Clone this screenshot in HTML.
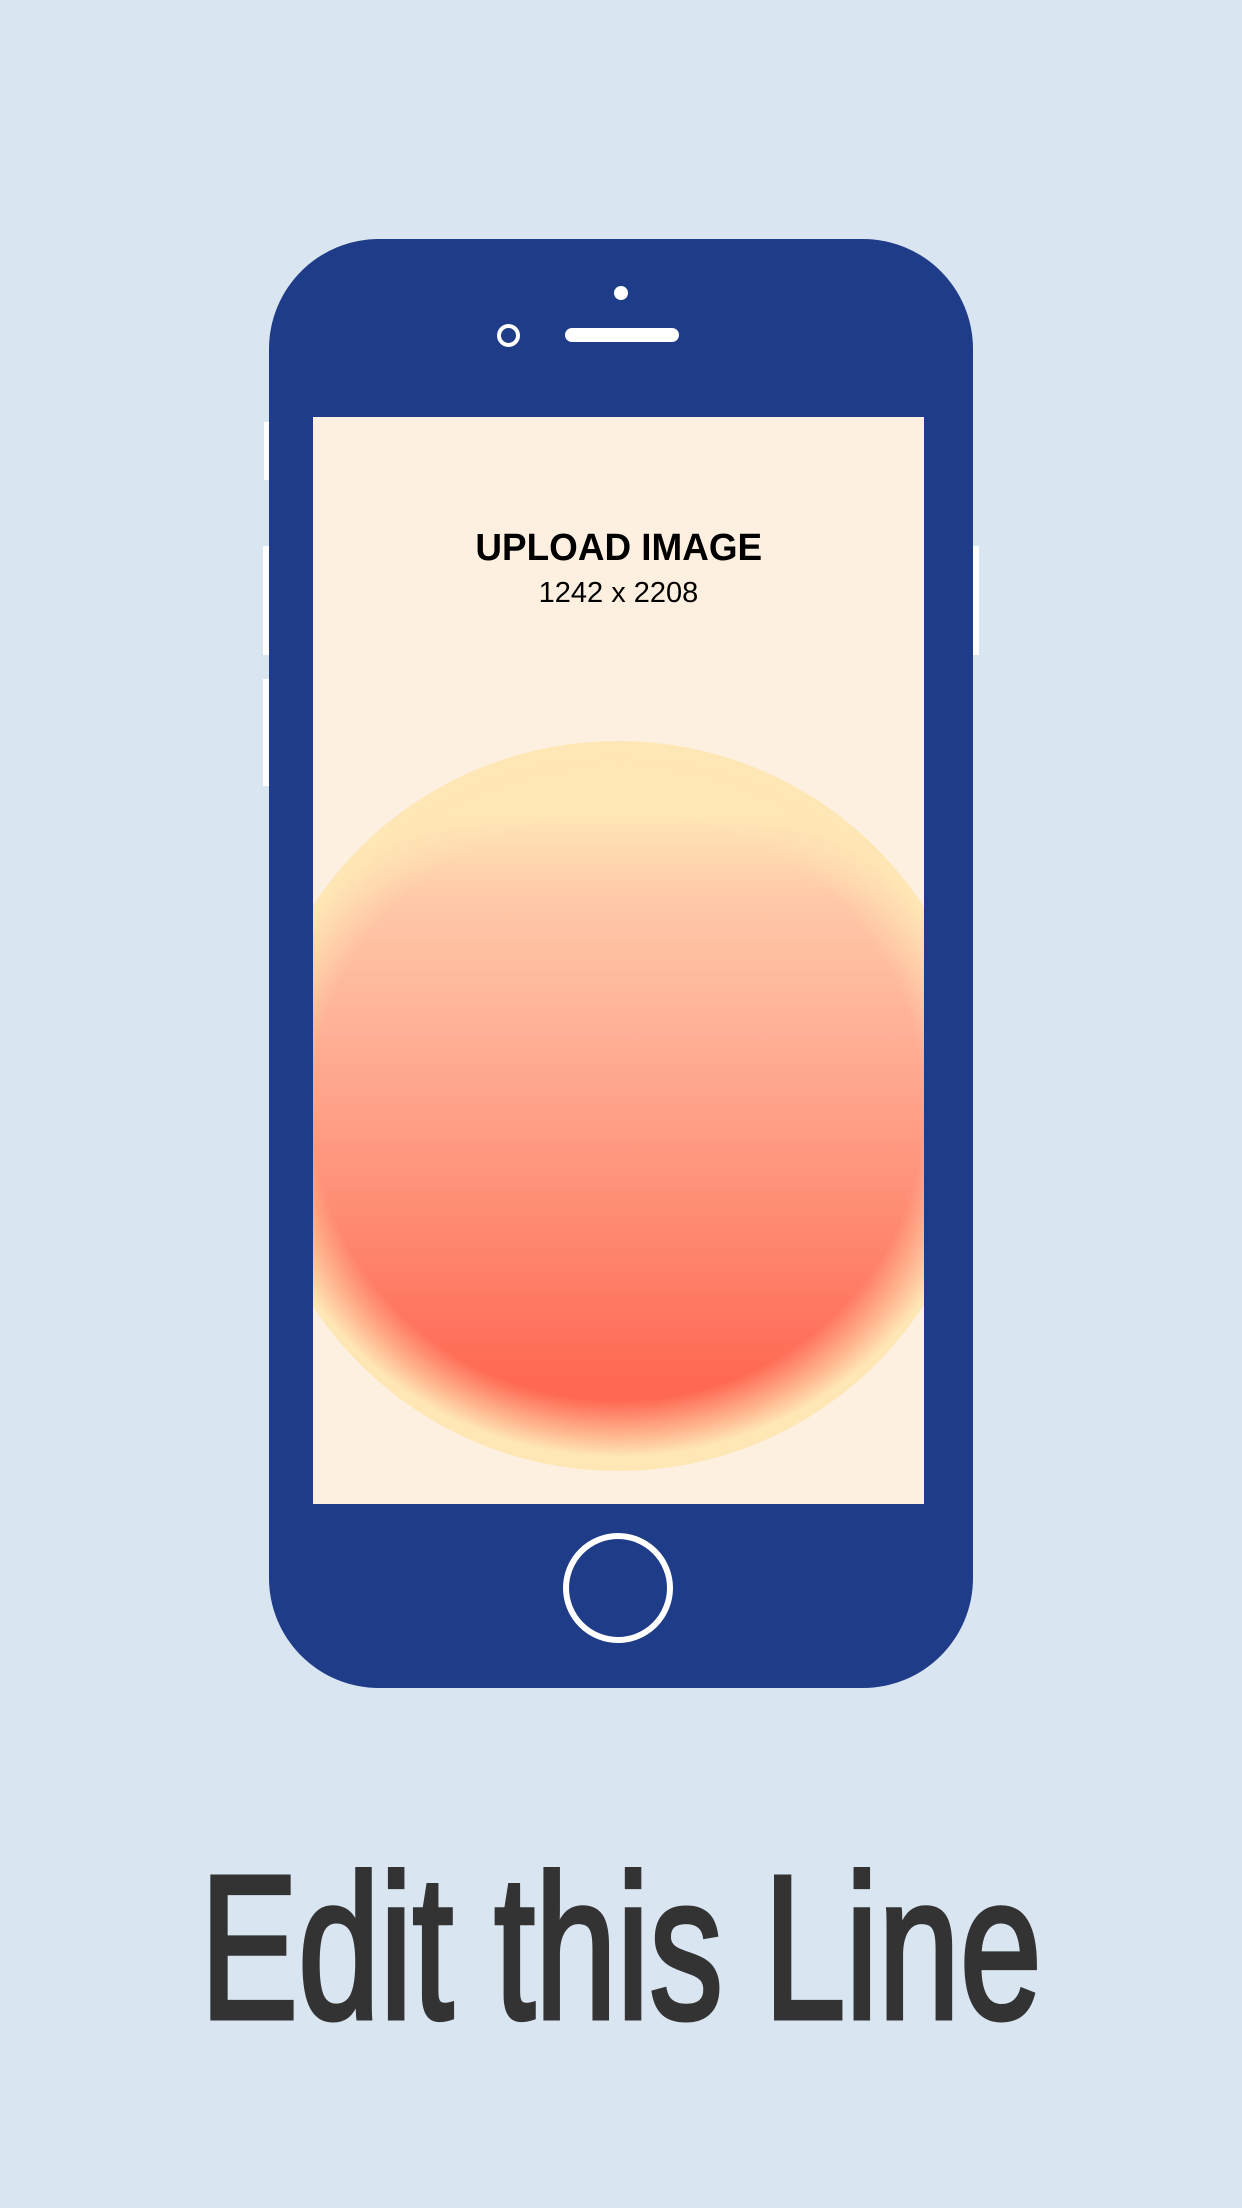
<!DOCTYPE html>
<html><head><meta charset="utf-8"><style>
html,body{margin:0;padding:0}
body{width:1242px;height:2208px;background:#d9e5f1;position:relative;overflow:hidden;font-family:"Liberation Sans",sans-serif}
.a{position:absolute}
.phone{left:269px;top:239px;width:704px;height:1449px;background:#1f3c88;border-radius:110px}
.screen{left:313px;top:417px;width:611px;height:1087px;background:#fdf0e1;overflow:hidden}
.circ{left:-60px;top:324px;width:730px;height:730px;border-radius:50%;background:#ffe6b5}
.inner{left:0;top:0;width:730px;height:730px;
background:linear-gradient(to bottom,#ffe6b5 0%,#ffe6b5 10%,#ffc8a8 22%,#ffb096 40%,#ff9078 62%,#ff6852 88%,#ff6450 100%);
-webkit-mask-image:radial-gradient(ellipse 50% 48% at 50% 50%,#000 84%,transparent 100%);
mask-image:radial-gradient(ellipse 50% 48% at 50% 50%,#000 84%,transparent 100%)}
.btn{background:#fff}
</style></head><body>
<div class="a btn" style="left:264px;top:422px;width:5px;height:58px"></div>
<div class="a btn" style="left:263px;top:546px;width:6px;height:109px"></div>
<div class="a btn" style="left:263px;top:679px;width:6px;height:107px"></div>
<div class="a btn" style="left:973px;top:546px;width:6px;height:109px"></div>
<div class="a phone"></div>
<div class="a" style="left:614px;top:286px;width:14px;height:14px;border-radius:50%;background:#fff"></div>
<div class="a" style="left:565px;top:328px;width:114px;height:14px;border-radius:7px;background:#fff"></div>
<div class="a" style="left:497px;top:324px;width:15px;height:15px;border-radius:50%;border:4px solid #fff"></div>
<div class="a screen">
  <div class="a circ"><div class="a inner"></div></div>
  <div class="a" style="left:0;width:611px;top:110px;text-align:center;font-weight:bold;font-size:38px;color:#000"><span style="display:inline-block;transform:scaleX(0.97)">UPLOAD IMAGE</span></div>
  <div class="a" style="left:0;width:611px;top:160px;text-align:center;font-size:29px;color:#000"><span style="display:inline-block;transform:scaleX(1.0)">1242 x 2208</span></div>
</div>
<div class="a" style="left:563px;top:1533px;border-radius:50%;border:6px solid #fff;box-sizing:border-box;width:110px;height:110px"></div>
<div class="a" style="left:0;width:1242px;top:1838px;text-align:center;color:#333;font-size:205px;line-height:220px;white-space:nowrap">
<span style="display:inline-block;transform:scaleX(0.717);-webkit-text-stroke:5px #333">Edit this Line</span></div>
</body></html>
